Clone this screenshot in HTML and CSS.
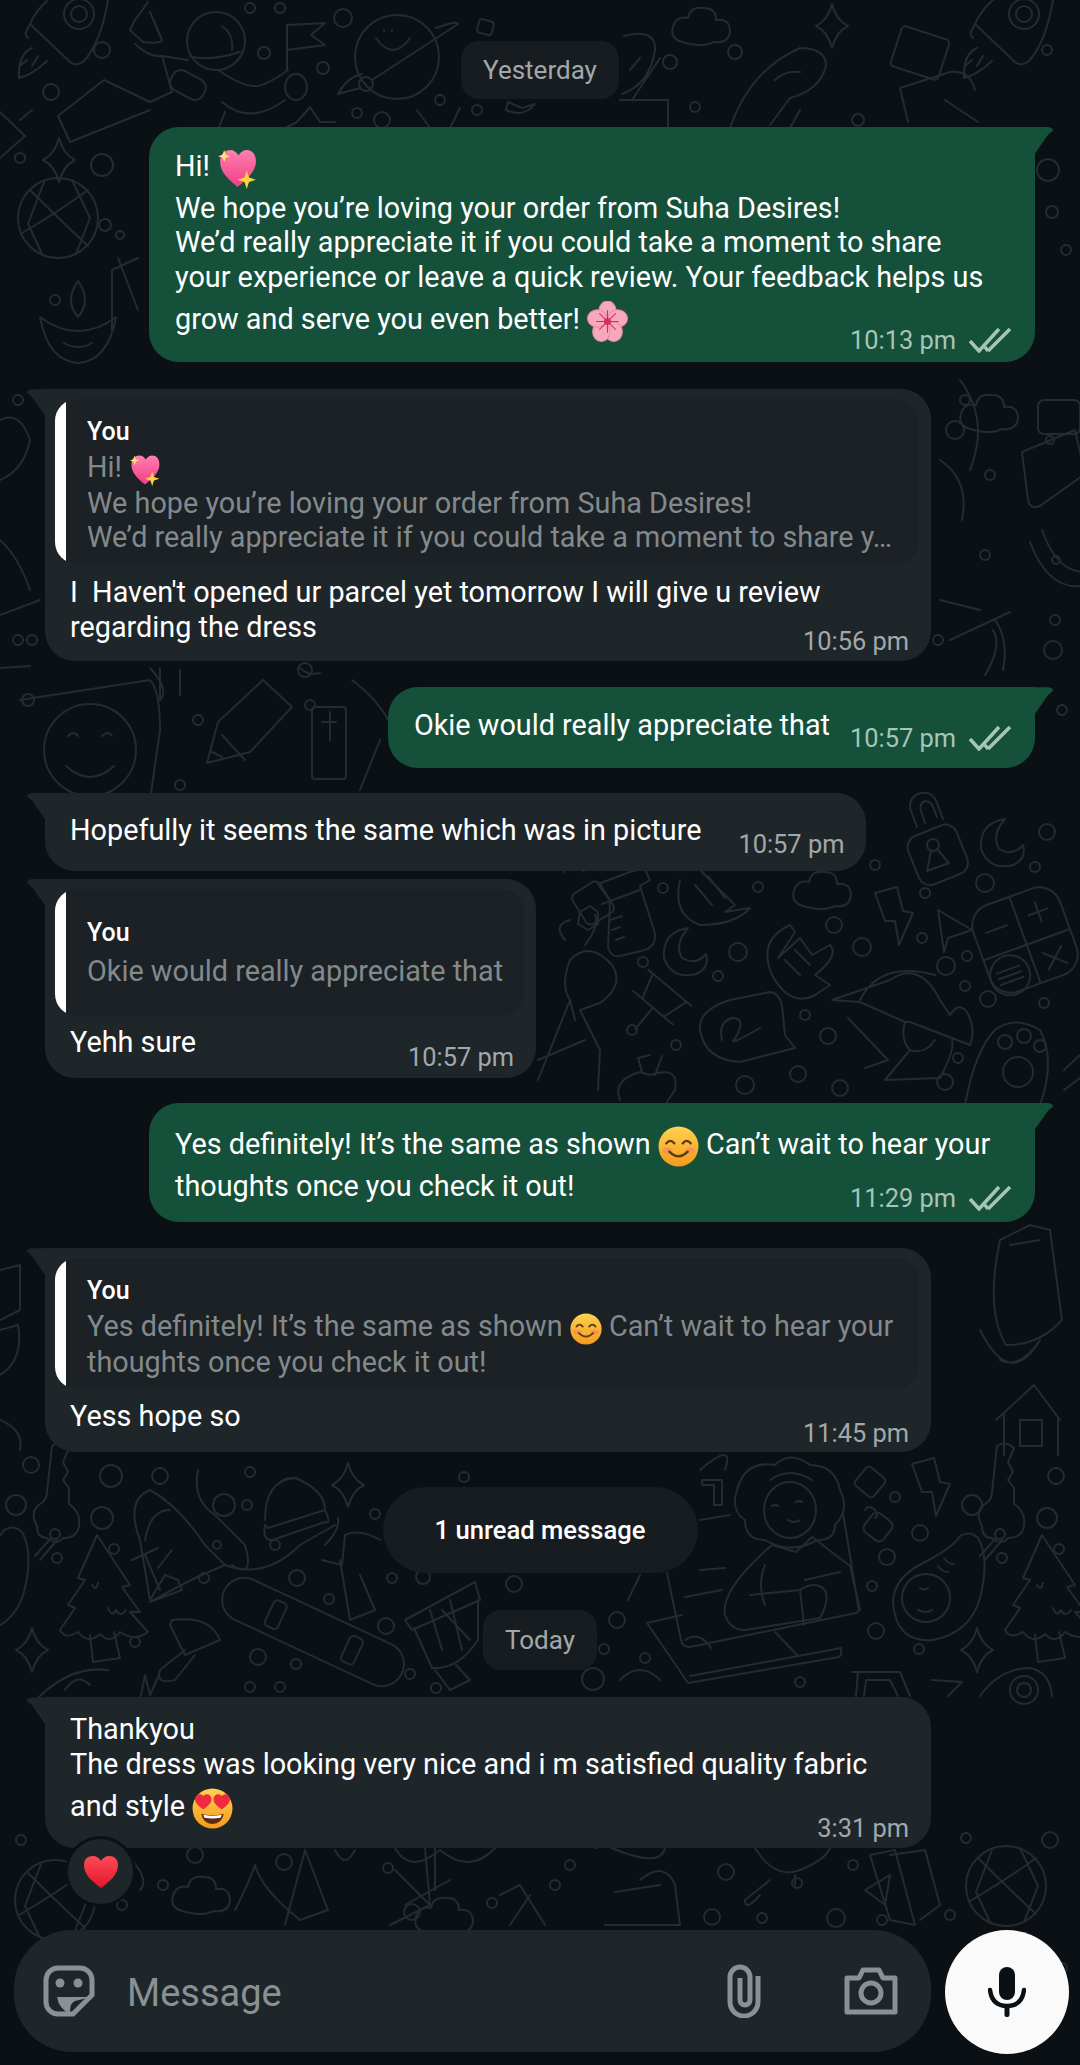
FILE: index.html
```html
<!DOCTYPE html>
<html>
<head>
    <title>Chat</title>
    <link rel="stylesheet" href="styles.css">
</head>
<body>

<div class="screen">

    <!-- wallpaper doodles + emoji defs -->
    <svg class="doodles" viewBox="0 0 1080 2065" aria-hidden="true">
        <defs>
            <linearGradient id="g-pink" x1="0" y1="0" x2="0" y2="1"><stop offset="0" stop-color="#ff7fb0"/><stop offset="1" stop-color="#f23d85"/></linearGradient>
            <linearGradient id="g-yellow" x1="0" y1="0" x2="0" y2="1"><stop offset="0" stop-color="#ffd24f"/><stop offset="1" stop-color="#f59a1d"/></linearGradient>
            <linearGradient id="g-red" x1="0" y1="0" x2="0" y2="1"><stop offset="0" stop-color="#ff4a55"/><stop offset="1" stop-color="#e3162c"/></linearGradient>

            <symbol id="e-spark" viewBox="0 0 40 40">
                <path d="M20 38C10 30 3 23 3 13 3 6 8 2 13 2c3 0 6 2 8 5 2-3 5-5 8-5 5 0 9 4 9 11 0 10-9 18-18 25z" fill="url(#g-pink)"/>
                <path d="M7 2l1.500 4.500L13 8 8.500 9.500 7 14 5.500 9.500 1 8l4.500-1.500z" fill="#ffe27a"/>
                <path d="M29 22l2.200 6.800L38 31l-6.800 2.200L29 40l-2.200-6.800L20 31l6.800-2.200z" fill="#ffd23f"/>
            </symbol>
            <symbol id="e-blossom" viewBox="0 0 40 40">
                <g fill="#f7a8bd" stroke="#ec8aa6" stroke-width="1">
                    <ellipse cx="20" cy="10" rx="8.500" ry="10"/>
                    <ellipse cx="30" cy="17" rx="9.500" ry="8.500"/>
                    <ellipse cx="26" cy="30" rx="8.500" ry="9.500"/>
                    <ellipse cx="14" cy="30" rx="8.500" ry="9.500"/>
                    <ellipse cx="10" cy="17" rx="9.500" ry="8.500"/>
                </g>
                <circle cx="20" cy="20" r="3.500" fill="#d93a6a"/>
                <path d="M20 9v22M9 20h22M12 12l16 16M28 12L12 28" stroke="#c9305f" stroke-width="1"/>
            </symbol>
            <symbol id="e-smile" viewBox="0 0 40 40">
                <circle cx="20" cy="20" r="19.500" fill="url(#g-yellow)"/>
                <ellipse cx="9" cy="24" rx="5" ry="3" fill="#f58a5a" opacity=".7"/>
                <ellipse cx="31" cy="24" rx="5" ry="3" fill="#f58a5a" opacity=".7"/>
                <path d="M8 17q4-5 8 0M24 17q4-5 8 0" fill="none" stroke="#5b3a14" stroke-width="2.200" stroke-linecap="round"/>
                <path d="M11 25q9 9 18 0" fill="none" stroke="#5b3a14" stroke-width="2.200" stroke-linecap="round"/>
            </symbol>
            <symbol id="e-hearteyes" viewBox="0 0 40 40">
                <circle cx="20" cy="20" r="19.500" fill="url(#g-yellow)"/>
                <path d="M11 21C7 18 3 15 3 11 3 8 5 6 8 6c1.500 0 2.500 1 3 2 .5-1 1.500-2 3-2 3 0 5 2 5 5 0 4-4 7-8 10z" fill="#ee2a3f"/>
                <path d="M29 21c-4-3-8-6-8-10 0-3 2-5 5-5 1.500 0 2.500 1 3 2 .5-1 1.500-2 3-2 3 0 5 2 5 5 0 4-4 7-8 10z" fill="#ee2a3f"/>
                <path d="M9 25q11 3 22 0-2 10-11 10T9 25z" fill="#5b2a14"/>
                <path d="M11 26q9 2 18 0l-1 3q-8 1.500-16 0z" fill="#fff"/>
            </symbol>
            <symbol id="e-heart" viewBox="0 0 36 34">
                <path d="M18 33C9 26 1 20 1 10 1 4 5 1 10 1c3.500 0 6.500 2 8 5 1.500-3 4.500-5 8-5 5 0 9 3 9 9 0 10-8 16-17 23z" fill="url(#g-red)"/>
            </symbol>

            <g id="d-rocket">
                <path d="M30 24L70 62Q76 67 84 61Q101 42 108 0M30 24Q36 10 50-2M30 24L27 30Q24 34 28 38"/>
                <circle cx="79" cy="14" r="15"/><circle cx="79" cy="14" r="8"/>
                <path d="M32 48Q18 54 19 78Q32 75 47 61M27 60L20 66M38 56L32 66"/>
            </g>
            <g id="d-tree">
                <path d="M-3-55L30-5L22-3L40 22L30 22L48 42Q35 52 20 42Q10 55 0 44Q-12 55-22 42Q-35 50-40 40L-25 18L-32 15L-15-10L-22-12Z"/>
                <path d="M-10 45L-7 72L20 68L14 42M-8-5Q-4 2-2-7M8 18Q12 28 16 20Q20 28 26 20"/>
            </g>
            <g id="d-key">
                <path d="M-18 14Q-26 0-15-8Q-8-12-8-20L-3-66Q5-72 14-64L8-50L13-40L8-32L14-24L14-8Q26 0 24 14Q22 26 8 26Q2 34-8 26Q-18 26-18 14Z"/>
                <circle cx="0" cy="22" r="5"/>
                <path d="M-4 26L-20 44M2 28L-15 48"/>
            </g>
            <g id="d-avocado">
                <path d="M40-50Q52-30 42 10Q32 45-5 52Q-42 55-45 15Q-45-10-15-25Q15-40 22-52Q32-58 40-50Z"/>
                <circle cx="-12" cy="10" r="24"/>
                <path d="M-18 0q4 3 8 0M-20 22q8 4 14 0M0-22q4 6 10 6M6-30q4 6 10 6"/>
            </g>
            <g id="d-star"><path d="M0-22Q4-6 16 0Q4 6 0 22Q-4 6-16 0Q-4-6 0-22Z"/></g>
            <g id="d-cloud"><path d="M-20 14Q-34 10-28-4Q-24-12-14-10Q-12-22 2-20Q14-20 14-8Q28-10 28 4Q26 16 12 14Q0 20-20 14Z"/></g>
            <g id="d-bolt"><path d="M-16-24L6-30L12-6L22-4L8 28L4 4L-6 4Z"/></g>
            <g id="d-moon"><path d="M2-24Q-24-20-22 6Q-14 28 10 22Q24 16 20 2Q10 14-4 6Q-12-8 2-24Z"/></g>
            <g id="d-lock">
                <rect x="-26" y="-24" width="52" height="52" rx="12" transform="rotate(-22)"/>
                <path d="M-20-26L-26-42Q-30-56-16-60Q-4-62 0-50L6-34M-12-30L-16-42Q-18-50-12-52Q-6-52-4-46L0-36"/>
                <circle cx="-4" cy="-8" r="6"/><path d="M-6-2L-10 18L12 10L0-4"/>
            </g>
            <g id="d-globe">
                <circle r="40"/>
                <path d="M-28-28Q0 0 30 28M-36 15Q0-6 30-28M-14-36L-30 6L-16 36M14-38L32 0L18 36"/>
            </g>
            <g id="d-lamp">
                <path d="M-38-8Q-30 36 0 38Q30 36 38-8Q20 6 0 6Q-20 6-38-8Z"/>
                <path d="M0-8Q-14-24 0-44Q14-24 0-8ZM-14 18q14 8 28 0"/>
            </g>
        </defs>

        <g class="doodle-lines">
            <!-- top strip -->
            <use href="#d-rocket"/>
            <use href="#d-rocket" x="945"/>
            <path d="M148 2L135 20L130 30L143 42Q160 44 162 40L150 12M135 44Q150 58 162 56L172 92L150 102L104 80L58 116L70 142L100 130L150 110"/>
            <circle cx="216" cy="41" r="29"/>
            <path d="M190 56Q208 62 240 52M222 26Q234 34 232 50M162 56L188 60M218 70Q250 92 264 84Q278 78 288 70"/>
            <rect x="170" y="74" width="36" height="22" rx="9" transform="rotate(28 188 85)"/>
            <path d="M287 70V25L325 23L311 35L325 45L287 50"/>
            <ellipse cx="296" cy="87" rx="11" ry="13"/>
            <path d="M222 102Q250 126 285 100M225 112L218 130"/>
            <circle cx="397" cy="57" r="42"/>
            <circle cx="366" cy="84" r="7"/>
            <path d="M372 80L458 24Q458 20 436 28M360 88L338 94Q346 78 362 74M376 38q17 24 34 0M384 30v1M392 30v1"/>
            <path d="M285 128L297 122L310 107L320 122L335 122M417 110L430 128M460 108L450 128"/>
            <rect x="478" y="20" width="15" height="14" rx="3" transform="rotate(14 485 27)"/>
            <path d="M506 110Q524 118 535 104L522 108L508 102ZM624 36Q656 28 655 50Q650 84 622 94M620 100H668V128M660 58L632 100M640 58l-10 12"/>
            <use href="#d-cloud" x="702" y="28"/>
            <use href="#d-star" x="832" y="26"/>
            <path d="M730 128Q750 70 800 48Q826 48 826 66Q820 90 790 98L770 125M775 80Q785 70 800 72M800 110L790 128"/>
            <rect x="895" y="32" width="50" height="42" rx="4" transform="rotate(18 920 53)"/>
            <path d="M908 122L900 88L950 72Q970 70 975 90M945 100L978 122"/>

            <!-- left column, top half -->
            <use href="#d-star" x="59" y="160"/>
            <use href="#d-globe" x="58" y="218"/>
            <use href="#d-lamp" x="78" y="325"/>
            <path d="M0 112L25 136L0 158M20 120L32 110M138 258L112 270V330M118 258L138 310"/>
            <path d="M0 420Q20 410 30 440Q24 470 0 480M0 540Q18 556 30 590M0 615L40 600"/>

            <!-- strip between first two bubbles, right side -->
            <use href="#d-cloud" x="990" y="415"/>
            <path d="M1022 452L1075 430L1085 474L1040 506Q1030 510 1028 500Z"/>
            <rect x="1038" y="400" width="42" height="34" rx="6"/>
            <path d="M1030 542Q1048 590 1082 586M1042 530Q1056 570 1082 572"/>
            <circle cx="1056" cy="560" r="4"/>
            <path d="M960 380Q990 420 970 470M940 460Q970 480 962 520M940 600L980 610M950 640L1010 612"/>
            <path d="M985 675q18-30 8-45M995 620q14 20 8 50"/>

            <!-- left of third bubble -->
            <circle cx="90" cy="750" r="46"/>
            <path d="M68 736q6-6 10 0M102 736q6-6 10 0M66 766q24 22 48 0"/>
            <path d="M20 700L150 680Q160 690 160 730L150 800M0 668L30 666"/>
            <path d="M207 763L218 722L263 680L292 707L250 752Z"/>
            <path d="M222 735L245 760M212 752L222 757M150 668Q170 690 160 700L160 668M180 670V695"/>
            <rect x="312" y="707" width="34" height="72" rx="3"/>
            <path d="M322 722h14M330 712v28"/>
            <path d="M352 680Q378 700 388 720M300 668q8 8 20 5M380 740L360 790"/>

            <!-- right of short quoted bubble -->
            <use href="#d-lock" x="937" y="853"/>
            <use href="#d-moon" x="1003" y="843"/>
            <use href="#d-moon" x="686" y="952"/>
            <use href="#d-cloud" x="823" y="892"/>
            <use href="#d-bolt" x="891" y="917"/>
            <path d="M938 910L972 930L948 938L944 952Z"/>
            <g transform="translate(1025 940) rotate(-20)">
                <rect x="-46" y="-46" width="92" height="92" rx="22"/>
                <path d="M0-46V46M-46 5H46M12-22H32M22-32V-12M-34-20H-12M12 18L32 36M32 18L12 36"/>
                <circle cx="-26" cy="28" r="20"/>
                <path d="M-38 22H-14M-38 28H-14M-38 34H-14"/>
            </g>
            <rect x="577" y="885" width="32" height="36" rx="6" transform="rotate(-32 593 903)"/>
            <path d="M564 872q2-10 12-10 8 2 8 10"/>
            <path d="M610 901L598 884L630 872L644 868L650 880L640 886L654 930Q658 945 645 950L620 956Q612 958 608 948Z"/>
            <path d="M610 920L622 916M612 930L620 927M616 940L624 937M602 904L640 890"/>
            <path d="M680 880Q672 915 700 925Q735 925 750 908L725 912L735 905L700 870M695 885L712 905M708 876L725 898"/>
            <polygon points="580,912 590,906 598,912 598,924 588,930 578,924"/>
            <path d="M772 975Q757 940 790 925L795 932L778 958L800 938L812 955L830 945Q840 955 815 975L830 985L815 995Q790 1008 772 975ZM785 960L800 975M795 950L810 965"/>
            <g transform="translate(662 997) rotate(40)">
                <path d="M-28-12H28M-22-12L-14 14H14L22-12M-26 14H26M0 14V42"/>
            </g>
            <path d="M700 1030Q698 1010 730 1000L770 992Q778 992 782 1005L785 1035L795 1048L740 1062Q705 1060 700 1030ZM722 1040Q718 1022 732 1018Q748 1018 734 1040Q728 1046 760 1028"/>
            <path d="M832 1000L890 980Q920 960 940 1000L950 1015Q960 1000 968 1014Q976 1030 970 1045L910 1022L905 1022L860 1002ZM860 1000Q880 960 935 975M905 1022Q900 1040 910 1050Q925 1055 935 1040M910 1050L885 1080L940 1078Q955 1050 952 1040M848 1018L888 1060L865 1068"/>
            <path d="M965 1105Q975 1050 995 1030Q1015 1015 1040 1030Q1056 1060 1040 1105"/>
            <circle cx="1005" cy="1042" r="7"/><circle cx="1024" cy="1036" r="7"/><circle cx="1040" cy="1046" r="6"/>
            <circle cx="1018" cy="1072" r="15"/>
            <path d="M620 1100Q612 1080 640 1072L650 1075Q680 1065 675 1090L665 1105M642 1072L638 1058L650 1055M655 1075L662 1056"/>
            <path d="M538 1080L570 1000Q560 985 570 960Q590 940 612 965Q625 985 600 1003L580 1010L600 1050L598 1090M538 1060L585 1040M570 1000L575 1020"/>
            <path d="M565 940Q552 925 570 920M585 945Q600 925 595 915"/>
            <path d="M1064 1070L1080 1055M1064 1090L1080 1078"/>

            <!-- right of long bubbles -->
            <path d="M1000 1240L1030 1225L1050 1230L1062 1320Q1040 1345 1006 1345Q985 1310 1000 1240ZM1010 1245L1040 1240"/>
            <path d="M980 1330Q1010 1390 1040 1340Q1020 1370 1000 1360"/>
            <path d="M996 1420L1034 1385L1060 1420M1004 1415V1455M1058 1418V1455"/>
            <rect x="1020" y="1420" width="22" height="26"/>
            <path d="M0 1270L20 1265L20 1310L0 1320M0 1330L18 1325Q24 1360 0 1375M0 1420Q24 1430 20 1450"/>

            <!-- middle band, left -->
            <use href="#d-key" x="55" y="1512"/>
            <use href="#d-avocado" x="-18" y="1582"/>
            <use href="#d-tree" x="100" y="1590"/>
            <use href="#d-star" x="32" y="1650"/>
            <path d="M140 1540Q125 1500 150 1490Q178 1505 205 1545L225 1565L195 1578L172 1590L150 1602L182 1590L178 1580L165 1575L150 1600ZM145 1540Q150 1510 170 1510M158 1568L172 1550M132 1560L158 1548M160 1590L145 1555"/>
            <path d="M198 1470Q192 1500 215 1515L245 1545Q255 1580 232 1565M225 1565Q265 1580 300 1545L335 1525"/>
            <circle cx="217" cy="1545" r="4"/>
            <path d="M265 1520Q265 1480 295 1478Q325 1490 325 1510M268 1528L325 1510Q332 1525 325 1522L272 1540Q262 1540 265 1525ZM280 1482q12-8 24 0"/>
            <use href="#d-star" x="348" y="1485"/>
            <path d="M338 1518Q340 1530 325 1545M322 1560L342 1565L345 1535Q360 1528 380 1540M360 1575L375 1610L350 1620L340 1560"/>
            <g transform="translate(313 1632) rotate(25)">
                <rect x="-98" y="-22" width="196" height="44" rx="22"/>
                <rect x="-48" y="-14" width="14" height="28" rx="4"/>
                <rect x="36" y="-14" width="14" height="28" rx="4"/>
            </g>
            <path d="M172 1620Q210 1615 220 1640L185 1655L170 1625ZM185 1650L160 1670Q155 1685 175 1680L195 1655"/>
            <path d="M405 1620L475 1582L480 1600L412 1630ZM414 1628L432 1668Q458 1670 478 1640L478 1600M435 1670L450 1690L470 1680L456 1665M430 1610L442 1650M450 1600L462 1650M442 1610L470 1640"/>
            <path d="M36 1700Q70 1665 108 1670M65 1690q12-18 25-5M140 1700l5-25 5 20 8-18"/>

            <!-- middle band, right: woman at laptop -->
            <path d="M667 1573L681 1640Q682 1647 690 1647L856 1613Q860 1612 858 1605L843 1513"/>
            <path d="M647 1623L688 1683L839 1657Q842 1655 841 1648L690 1676"/>
            <path d="M647 1623L682 1615M700 1570L725 1568M685 1597L722 1590M700 1520L730 1515"/>
            <path d="M737 1490Q745 1460 775 1465Q790 1450 810 1465Q835 1465 840 1490Q850 1510 835 1525Q835 1540 818 1540Q790 1555 765 1540Q745 1540 745 1520Q730 1510 737 1490Z"/>
            <ellipse cx="790" cy="1510" rx="26" ry="28"/>
            <path d="M772 1506q4-2 6 0M796 1502q4-2 6 0M788 1520q6 4 12 0M770 1480q20-14 42 0"/>
            <path d="M772 1545L796 1552L812 1537L850 1566L860 1610M772 1545Q720 1590 725 1615Q730 1630 745 1630L820 1618Q830 1600 825 1590Q815 1580 800 1590L804 1625M800 1590L750 1595M805 1580L840 1572M765 1565q-8 20 0 40"/>
            <path d="M775 1632L797 1655M702 1480H722V1505H714V1485H702Z"/>
            <rect x="858" y="1470" width="24" height="24" rx="4" transform="rotate(40 870 1482)"/>
            <rect x="866" y="1515" width="24" height="24" rx="6" transform="rotate(38 878 1527)"/>
            <path d="M865 1510q4-6 10 0 4 6 0 8"/>
            <use href="#d-bolt" x="928" y="1488"/>
            <use href="#d-key" x="1000" y="1512"/>
            <use href="#d-avocado" x="938" y="1588"/>
            <use href="#d-tree" x="1045" y="1590"/>
            <use href="#d-star" x="977" y="1650"/>
            <path d="M852 1672H900L910 1696M858 1672L856 1696M866 1680H890L898 1696M866 1680L864 1696"/>
            <path d="M932 1680L962 1682L948 1696M980 1696Q1000 1668 1030 1668Q1050 1672 1052 1696"/>
            <circle cx="1024" cy="1690" r="14"/><circle cx="1024" cy="1690" r="7"/>
            <path d="M725 1470Q735 1440 700 1470M630 1540L660 1510L655 1570M640 1575L628 1600"/>
            <path d="M685 1640q14-10 26 8M620 1680q20-20 40 0"/>

            <!-- band above the input -->
            <use href="#d-globe" x="55" y="1900"/>
            <use href="#d-globe" x="1006" y="1886"/>
            <use href="#d-cloud" x="202" y="1897"/>
            <use href="#d-cloud" x="445" y="1918"/>
            <path d="M130 1858Q150 1880 140 1890M235 1910Q250 1880 255 1865Q262 1890 300 1920L328 1910L305 1850L285 1925M335 1850Q345 1870 355 1850"/>
            <path d="M395 1870L430 1905L390 1925M405 1905L450 1880"/>
            <path d="M425 1848L430 1905M500 1895L520 1885L545 1925M510 1925L530 1895"/>
            <path d="M395 1848Q410 1875 440 1850Q470 1875 495 1848M435 1848V1890"/>
            <path d="M595 1848L605 1845Q660 1870 665 1848M640 1880Q665 1860 675 1885L680 1925L605 1925M615 1892L660 1885"/>
            <path d="M755 1848Q775 1880 800 1870Q825 1860 830 1848M770 1880L745 1900Q745 1912 760 1895M795 1875V1885"/>
            <path d="M870 1855L895 1850L915 1925L890 1920ZM890 1855L925 1850L940 1905L920 1920M865 1890L890 1875L885 1905Z"/>

            <!-- little circles scattered over the wallpaper -->
            <circle cx="102" cy="50" r="8"/><circle cx="51" cy="92" r="8"/><circle cx="264" cy="53" r="6"/><circle cx="323" cy="68" r="6"/><circle cx="343" cy="18" r="9"/><circle cx="250" cy="8" r="5"/><circle cx="280" cy="8" r="5"/>
            <circle cx="440" cy="100" r="5"/><circle cx="477" cy="110" r="5"/><circle cx="357" cy="113" r="5"/><circle cx="382" cy="120" r="8"/>
            <circle cx="735" cy="52" r="7"/><circle cx="695" cy="107" r="5"/><circle cx="670" cy="62" r="7"/><circle cx="1047" cy="50" r="5"/><circle cx="858" cy="120" r="6"/>
            <circle cx="20" cy="158" r="5"/><circle cx="102" cy="165" r="11"/><circle cx="105" cy="225" r="6"/><circle cx="55" cy="300" r="5"/><circle cx="120" cy="235" r="4"/><circle cx="1048" cy="170" r="11"/><circle cx="1052" cy="212" r="6"/><circle cx="1066" cy="250" r="5"/>
            <circle cx="18" cy="400" r="5"/><circle cx="32" cy="640" r="5"/><circle cx="18" cy="640" r="5"/><circle cx="965" cy="400" r="5"/><circle cx="955" cy="430" r="9"/><circle cx="990" cy="475" r="5"/><circle cx="1050" cy="440" r="4"/><circle cx="985" cy="555" r="5"/><circle cx="1055" cy="620" r="5"/><circle cx="1053" cy="650" r="9"/><circle cx="938" cy="640" r="5"/>
            <circle cx="305" cy="670" r="7"/><circle cx="198" cy="720" r="5"/><circle cx="180" cy="785" r="5"/><circle cx="310" cy="705" r="5"/><circle cx="28" cy="700" r="6"/><circle cx="1062" cy="710" r="5"/>
            <circle cx="663" cy="888" r="5"/><circle cx="758" cy="887" r="5"/><circle cx="738" cy="952" r="9"/><circle cx="834" cy="925" r="8"/><circle cx="643" cy="962" r="5"/><circle cx="718" cy="976" r="5"/><circle cx="862" cy="947" r="9"/><circle cx="925" cy="893" r="5"/><circle cx="875" cy="865" r="5"/><circle cx="985" cy="883" r="9"/><circle cx="1047" cy="832" r="8"/><circle cx="1035" cy="867" r="5"/><circle cx="922" cy="938" r="5"/><circle cx="946" cy="966" r="9"/><circle cx="967" cy="956" r="5"/><circle cx="965" cy="986" r="5"/><circle cx="988" cy="999" r="8"/><circle cx="1044" cy="1003" r="5"/>
            <circle cx="805" cy="1015" r="5"/><circle cx="828" cy="1036" r="8"/><circle cx="632" cy="1030" r="5"/><circle cx="676" cy="1045" r="5"/><circle cx="798" cy="1074" r="8"/><circle cx="840" cy="1088" r="8"/><circle cx="958" cy="1058" r="5"/><circle cx="945" cy="1082" r="8"/><circle cx="745" cy="1085" r="9"/>
            <circle cx="31" cy="1465" r="8"/><circle cx="111" cy="1476" r="11"/><circle cx="16" cy="1505" r="10"/><circle cx="102" cy="1518" r="11"/><circle cx="57" cy="1558" r="5"/><circle cx="114" cy="1549" r="5"/><circle cx="160" cy="1476" r="8"/><circle cx="250" cy="1472" r="5"/><circle cx="224" cy="1505" r="11"/><circle cx="247" cy="1505" r="5"/><circle cx="375" cy="1514" r="5"/><circle cx="275" cy="1545" r="5"/><circle cx="297" cy="1578" r="8"/><circle cx="329" cy="1599" r="5"/><circle cx="204" cy="1578" r="5"/><circle cx="135" cy="1642" r="5"/><circle cx="386" cy="1626" r="8"/><circle cx="258" cy="1657" r="8"/><circle cx="296" cy="1664" r="5"/><circle cx="410" cy="1674" r="5"/><circle cx="436" cy="1688" r="5"/><circle cx="250" cy="1687" r="5"/><circle cx="280" cy="1687" r="5"/><circle cx="392" cy="1578" r="5"/><circle cx="423" cy="1577" r="7"/><circle cx="464" cy="1477" r="5"/><circle cx="514" cy="1584" r="8"/>
            <circle cx="617" cy="1620" r="8"/><circle cx="604" cy="1649" r="5"/><circle cx="645" cy="1658" r="5"/><circle cx="593" cy="1679" r="11"/><circle cx="800" cy="1682" r="5"/>
            <circle cx="895" cy="1497" r="5"/><circle cx="920" cy="1533" r="8"/><circle cx="887" cy="1557" r="8"/><circle cx="972" cy="1505" r="10"/><circle cx="1056" cy="1476" r="8"/><circle cx="1047" cy="1518" r="10"/><circle cx="1002" cy="1558" r="5"/><circle cx="1059" cy="1549" r="5"/><circle cx="872" cy="1586" r="5"/><circle cx="876" cy="1631" r="8"/><circle cx="919" cy="1649" r="5"/>
            <circle cx="21" cy="1840" r="5"/><circle cx="195" cy="1855" r="8"/><circle cx="163" cy="1885" r="5"/><circle cx="122" cy="1905" r="5"/><circle cx="284" cy="1862" r="8"/><circle cx="388" cy="1868" r="5"/><circle cx="412" cy="1912" r="8"/><circle cx="492" cy="1903" r="5"/><circle cx="570" cy="1865" r="5"/><circle cx="555" cy="1885" r="5"/><circle cx="712" cy="1917" r="8"/><circle cx="726" cy="1872" r="8"/><circle cx="762" cy="1918" r="5"/><circle cx="797" cy="1883" r="5"/><circle cx="836" cy="1918" r="9"/><circle cx="853" cy="1865" r="5"/><circle cx="966" cy="1838" r="5"/><circle cx="1050" cy="1840" r="8"/><circle cx="882" cy="1920" r="5"/><circle cx="1062" cy="1968" r="5"/><circle cx="950" cy="1915" r="5"/>
        </g>
    </svg>

    <main class="chat">
        <div class="day">Yesterday</div>

        <div class="msg out m1 wide">
            <div class="ln ln-e">Hi! <svg class="emo"><use href="#e-spark"/></svg></div>
            <div class="ln">We hope you’re loving your order from Suha Desires!</div>
            <div class="ln">We’d really appreciate it if you could take a moment to share</div>
            <div class="ln">your experience or leave a quick review. Your feedback helps us</div>
            <div class="ln ln-e">grow and serve you even better! <svg class="emo"><use href="#e-blossom"/></svg></div>
            <div class="meta">10:13 pm<svg class="ticks" viewBox="0 0 44 26"><path d="M2 14l9 10L31 2M20 24L42 2M17 20l3 4"/></svg></div>
        </div>

        <div class="msg in m2 wide">
            <div class="quote">
                <div class="who">You</div>
                <div class="ln q-first">Hi! <svg class="emo emo-s"><use href="#e-spark"/></svg></div>
                <div class="ln">We hope you’re loving your order from Suha Desires!</div>
                <div class="ln clip">We’d really appreciate it if you could take a moment to share y…</div>
            </div>
            <div class="ln">I&nbsp; Haven't opened ur parcel yet tomorrow I will give u review</div>
            <div class="ln">regarding the dress</div>
            <div class="meta">10:56 pm</div>
        </div>

        <div class="msg out m3">
            <div class="ln">Okie would really appreciate that</div>
            <div class="meta">10:57 pm<svg class="ticks" viewBox="0 0 44 26"><path d="M2 14l9 10L31 2M20 24L42 2M17 20l3 4"/></svg></div>
        </div>

        <div class="msg in m4">
            <div class="ln">Hopefully it seems the same which was in picture</div>
            <div class="meta">10:57 pm</div>
        </div>

        <div class="msg in m5">
            <div class="quote quote-tall">
                <div class="who">You</div>
                <div class="ln q-first">Okie would really appreciate that</div>
            </div>
            <div class="ln">Yehh sure</div>
            <div class="meta">10:57 pm</div>
        </div>

        <div class="msg out m6 wide">
            <div class="ln ln-e">Yes definitely! It’s the same as shown <svg class="emo"><use href="#e-smile"/></svg> Can’t wait to hear your</div>
            <div class="ln">thoughts once you check it out!</div>
            <div class="meta">11:29 pm<svg class="ticks" viewBox="0 0 44 26"><path d="M2 14l9 10L31 2M20 24L42 2M17 20l3 4"/></svg></div>
        </div>

        <div class="msg in m7 wide">
            <div class="quote">
                <div class="who">You</div>
                <div class="ln q-first">Yes definitely! It’s the same as shown <svg class="emo emo-s"><use href="#e-smile"/></svg> Can’t wait to hear your</div>
                <div class="ln">thoughts once you check it out!</div>
            </div>
            <div class="ln">Yess hope so</div>
            <div class="meta">11:45 pm</div>
        </div>

        <div class="unread">1 unread message</div>
        <div class="day day-today">Today</div>

        <div class="msg in m8 wide">
            <div class="ln">Thankyou</div>
            <div class="ln">The dress was looking very nice and i m satisfied quality fabric</div>
            <div class="ln ln-e">and style <svg class="emo"><use href="#e-hearteyes"/></svg></div>
            <div class="meta">3:31 pm</div>
            <div class="reaction"><svg class="emo-heart"><use href="#e-heart"/></svg></div>
        </div>
    </main>

    <footer class="composer">
        <div class="input">
            <svg class="ic ic-sticker" viewBox="0 0 52 52">
                <path d="M15 3H37A12 12 0 0 1 49 15V30L30 49H15A12 12 0 0 1 3 37V15A12 12 0 0 1 15 3Z" fill="none" stroke-width="5"/>
                <circle cx="17" cy="18" r="4.500" class="ic-fill"/>
                <circle cx="35" cy="18" r="4.500" class="ic-fill"/>
                <path d="M14 32H48L32 36Q27 38 27 46V49Q16 44 14 32Z" class="ic-fill"/>
            </svg>
            <span class="placeholder">Message</span>
            <svg class="ic ic-clip" viewBox="0 0 34 54">
                <path d="M31 12V38A14 14 0 0 1 3 38V13A10 10 0 0 1 23 13V36A5 5 0 0 1 13 36V14" fill="none" stroke-width="5"/>
            </svg>
            <svg class="ic ic-cam" viewBox="0 0 54 48">
                <path d="M3 11H15L19 3H35L39 11H51V45H3Z" fill="none" stroke-width="5" stroke-linejoin="round"/>
                <circle cx="27" cy="26" r="10" fill="none" stroke-width="5"/>
            </svg>
        </div>
        <div class="mic">
            <svg viewBox="0 0 38 50" class="ic-mic">
                <rect x="11" y="0" width="16" height="33" rx="8" fill="#0b1014"/>
                <path d="M2 23Q4 39 19 39Q34 39 36 23" fill="none" stroke="#0b1014" stroke-width="4.500" stroke-linecap="round"/>
                <rect x="16.500" y="38" width="5" height="12" rx="2" fill="#0b1014"/>
            </svg>
        </div>
    </footer>
</div>

</body>
</html>
```

FILE: styles.css
```css
* { box-sizing: border-box; }
body { margin: 0; background: #0b1014; font-family: Roboto, "Liberation Sans", sans-serif; color: #fff; }

.screen { position: relative; width: 1080px; height: 2065px; overflow: hidden; display: flex; flex-direction: column; background: #0b1014; }
.doodles { position: absolute; left: 0; top: 0; width: 1080px; height: 2065px; }
.doodle-lines { fill: none; stroke: #262b2f; stroke-width: 2; stroke-linejoin: round; stroke-linecap: round; }

.chat { position: relative; flex: 1; display: flex; flex-direction: column; padding: 41px 45px 0 45px; }

.day { align-self: center; height: 58px; padding: 0 22px; display: flex; align-items: center; background: #171c20; border-radius: 18px; color: #a3a8ab; font-size: 26px; }
.day-today { margin-top: 37px; height: 60px; }
.unread { align-self: center; margin-top: 35px; width: 315px; height: 86px; display: flex; align-items: center; justify-content: center; background: #171c20; border-radius: 43px; font-size: 25.6px; font-weight: 500; }

/* bubbles */
.msg { position: relative; width: fit-content; padding: 0 25px; font-size: 28.8px; border-radius: 30px; }
.msg.wide { width: 886px; }
.in { background: #1f2629; align-self: flex-start; border-top-left-radius: 0; }
.out { background: #15503a; align-self: flex-end; border-top-right-radius: 0; padding-left: 26px; }
.in::before, .out::before { content: ""; position: absolute; top: 0; width: 20px; height: 28px; background: inherit; }
.in::before { left: -19px; clip-path: polygon(0 0, 100% 0, 100% 100%, 30% 28%, 0 10%); border-top-left-radius: 6px; }
.out::before { right: -19px; clip-path: polygon(0 0, 100% 0, 100% 10%, 70% 28%, 0 100%); border-top-right-radius: 6px; }

.ln { line-height: 34.4px; white-space: nowrap; }
.ln-e { line-height: 50px; height: 50px; }
.emo { width: 41px; height: 41px; vertical-align: middle; }
.emo-s { width: 32px; height: 32px; }

.meta { position: absolute; right: 22px; bottom: var(--meta-bottom); height: 28px; display: flex; align-items: center; gap: 12px; font-size: 25.4px; line-height: 28px; color: #a2a8ab; white-space: nowrap; }
.out .meta { right: 23px; color: #a5c6b7; }
.ticks { width: 44px; height: 26px; fill: none; stroke: #a5c6b7; stroke-width: 3.5; }

.quote { margin: 10px -13px 0 -15px; padding: 18px 21px 10px 32px; border-radius: 22px; background: linear-gradient(to right, #fff 11px, #1b2125 11px); color: #83898c; }
.quote-tall { padding-top: 29px; padding-bottom: 28px; }
.quote-tall .q-first { margin-top: 6px; }
.who { color: #fff; font-size: 25px; font-weight: 500; line-height: 30px; }
.q-first { margin-top: 3px; }
.clip { overflow: hidden; text-overflow: ellipsis; }

/* per message spacing */
.m1 { margin-top: 28px; padding-top: 14px; padding-bottom: 18px; --meta-bottom: 8px; }
.m2 { margin-top: 27px; padding-bottom: 17px; --meta-bottom: 6px; }
.m2 .quote + .ln { margin-top: 11px; }
.m3 { margin-top: 26px; padding-top: 21px; padding-bottom: 25px; padding-right: 205px; --meta-bottom: 16px; }
.m4 { margin-top: 25px; padding-top: 20px; padding-bottom: 24px; padding-right: 165px; --meta-bottom: 13px; }
.m5 { margin-top: 8px; padding-bottom: 18px; --meta-bottom: 7px; }
.m5 .quote + .ln { margin-top: 9px; }
.m6 { margin-top: 25px; padding-top: 16px; padding-bottom: 19px; --meta-bottom: 10px; }
.m7 { margin-top: 26px; padding-bottom: 19px; --meta-bottom: 5px; }
.m7 .quote + .ln { margin-top: 10px; }
.m8 { margin-top: 27px; padding-top: 15px; padding-bottom: 17px; --meta-bottom: 6px; }

.reaction { position: absolute; left: 23px; top: 142px; width: 65px; height: 65px; display: flex; align-items: center; justify-content: center; background: #1f2629; border-radius: 50%; box-shadow: 0 0 0 3px #0b1014; }
.emo-heart { width: 36px; height: 34px; }

/* message box */
.composer { position: relative; display: flex; gap: 14px; align-items: flex-start; padding: 0 11px 11px 14px; }
.input { flex: 1; height: 122px; display: flex; align-items: center; padding: 0 33px 0 29px; background: #1f2629; border-radius: 58px; }
.placeholder { flex: 1; margin-left: 32px; padding-top: 3px; font-size: 38px; color: #8a9094; }
.ic { stroke: #8a9094; }
.ic-fill { fill: #8a9094; stroke: none; }
.ic-sticker { width: 52px; height: 52px; }
.ic-clip { width: 34px; height: 54px; margin-right: 83px; }
.ic-cam { width: 54px; height: 48px; }
.mic { width: 124px; height: 124px; flex: none; display: flex; align-items: center; justify-content: center; background: #fafafa; border-radius: 50%; }
.ic-mic { width: 38px; height: 50px; }
```
